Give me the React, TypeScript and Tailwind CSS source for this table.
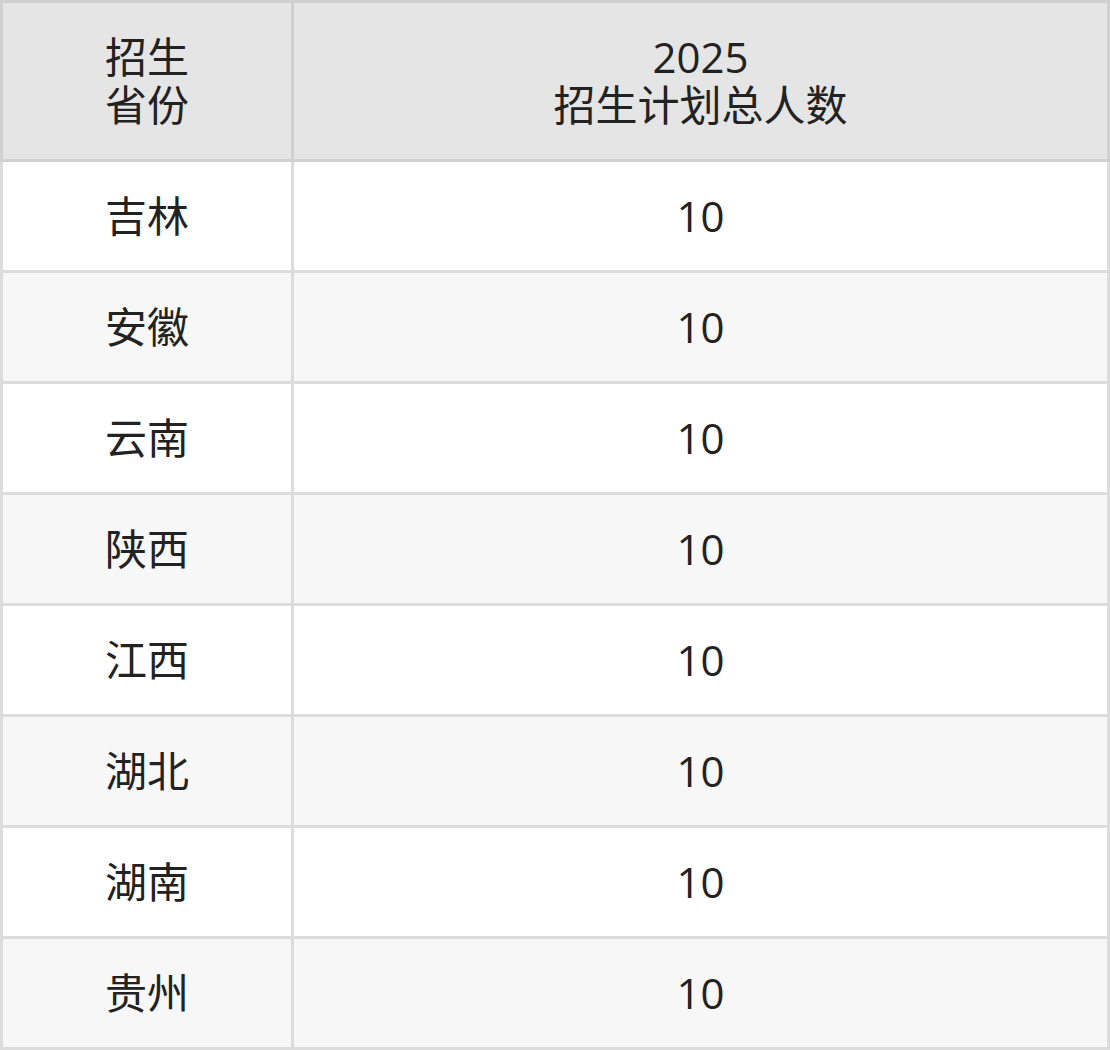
const ROWS = ['吉林', '安徽', '云南', '陕西', '江西', '湖北', '湖南', '贵州'];

export default function App() {
  return (
    <div className="w-[1110px] bg-white" style={{ fontFamily: "'Open Sans', 'Noto Sans CJK SC', sans-serif" }}>
      <table className="w-full border-collapse text-[42px] leading-[48px] text-[#222222]">
        <thead>
          <tr className="bg-[#e5e5e5]">
            <th className="w-[291px] h-[159px] border-[3px] border-[#d0d0d0] font-normal text-center align-middle">
              招生
              <br />
              省份
            </th>
            <th className="border-[3px] border-[#d0d0d0] font-normal text-center align-middle">
              2025
              <br />
              招生计划总人数
            </th>
          </tr>
        </thead>
        <tbody>
          {ROWS.map((name, i) => (
            <tr key={name} className={i % 2 === 1 ? 'bg-[#f7f7f7]' : 'bg-white'}>
              <td className="h-[111px] border-[3px] border-[#dcdcdc] text-center align-middle">{name}</td>
              <td className="border-[3px] border-[#dcdcdc] text-center align-middle">10</td>
            </tr>
          ))}
        </tbody>
      </table>
    </div>
  );
}
